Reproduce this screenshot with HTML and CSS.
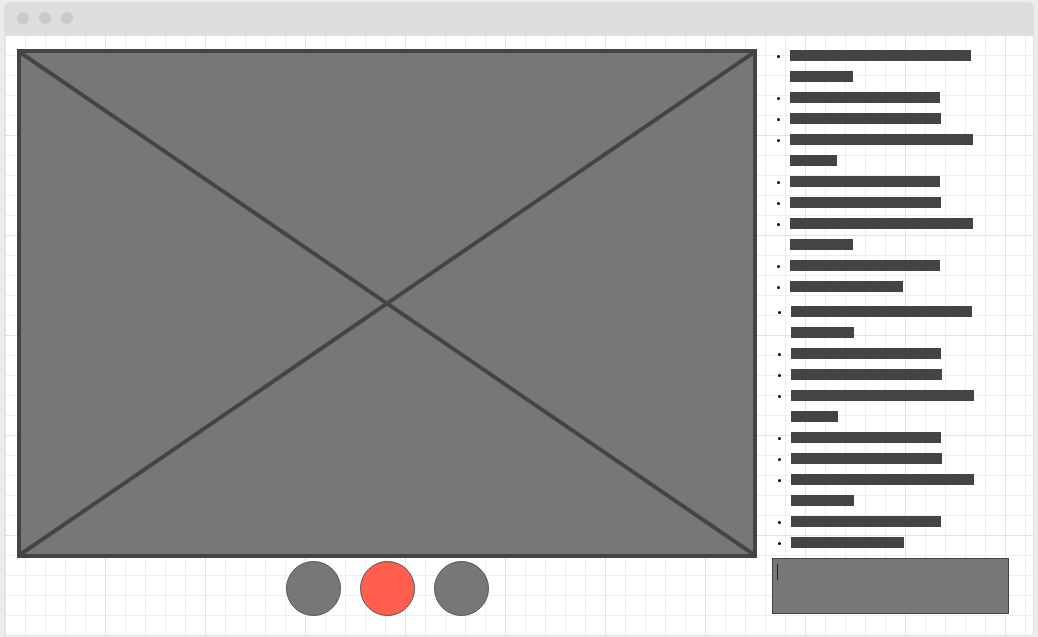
FILE: index.html
```html
<!DOCTYPE html>
<html lang="en">
<head>
    <meta charset="UTF-8">
    <meta name="viewport" content="width=device-width, initial-scale=1.0">
    <title>Video Chat Wireframe</title>
    <link rel="stylesheet" href="styles.css">
</head>
<body>
    <div class="window">
        <div class="titlebar">
            <span class="dot"></span>
            <span class="dot"></span>
            <span class="dot"></span>
        </div>
        <div class="content">
            <div class="main">
                <div class="video">
                    <svg class="cross" viewBox="0 0 100 100" preserveAspectRatio="none">
                        <line x1="0" y1="0" x2="100" y2="100" vector-effect="non-scaling-stroke"/>
                        <line x1="100" y1="0" x2="0" y2="100" vector-effect="non-scaling-stroke"/>
                    </svg>
                </div>
                <div class="controls">
                    <span class="btn-round"></span>
                    <span class="btn-round hangup"></span>
                    <span class="btn-round"></span>
                </div>
            </div>
            <div class="side">
                <ul class="chat">
                    <li><span class="bar" style="width:181px"></span><span class="bar" style="width:63px"></span></li>
                    <li><span class="bar" style="width:150px"></span></li>
                    <li><span class="bar" style="width:151px"></span></li>
                    <li><span class="bar" style="width:183px"></span><span class="bar" style="width:47px"></span></li>
                    <li><span class="bar" style="width:150px"></span></li>
                    <li><span class="bar" style="width:151px"></span></li>
                    <li><span class="bar" style="width:183px"></span><span class="bar" style="width:63px"></span></li>
                    <li><span class="bar" style="width:150px"></span></li>
                    <li><span class="bar" style="width:113px"></span></li>
                </ul>
                <ul class="chat second">
                    <li><span class="bar" style="width:181px"></span><span class="bar" style="width:63px"></span></li>
                    <li><span class="bar" style="width:150px"></span></li>
                    <li><span class="bar" style="width:151px"></span></li>
                    <li><span class="bar" style="width:183px"></span><span class="bar" style="width:47px"></span></li>
                    <li><span class="bar" style="width:150px"></span></li>
                    <li><span class="bar" style="width:151px"></span></li>
                    <li><span class="bar" style="width:183px"></span><span class="bar" style="width:63px"></span></li>
                    <li><span class="bar" style="width:150px"></span></li>
                    <li><span class="bar" style="width:113px"></span></li>
                </ul>
                <div class="input-box">
                    <span class="caret"></span>
                </div>
            </div>
        </div>
    </div>
</body>
</html>
```

FILE: styles.css
```css
body {
    margin: 0;
    background: #ececec;
    font-family: "Liberation Sans", Arial, sans-serif;
}
.window {
    margin: 2px 4px 0 4px;
    width: 1030px;
    height: 634px;
    display: flex;
    flex-direction: column;
}
.titlebar {
    height: 33px;
    background: #dddddd;
    border-radius: 6px 6px 0 0;
    display: flex;
    align-items: center;
    gap: 10px;
    padding-left: 13px;
    box-sizing: border-box;
    padding-bottom: 1px;
}
.dot {
    width: 12px;
    height: 12px;
    border-radius: 50%;
    background: #cacaca;
}
.content {
    flex: 1;
    display: flex;
    border-left: 1px solid #e2e2e2;
    border-right: 1px solid #e2e2e2;
    border-bottom: 1px solid #e2e2e2;
    background-color: #fff;
    background-image:
        linear-gradient(to right, #e2e2e2 1px, transparent 1px),
        linear-gradient(to bottom, #e2e2e2 1px, transparent 1px),
        linear-gradient(to right, #eeeeee 1px, transparent 1px),
        linear-gradient(to bottom, #eeeeee 1px, transparent 1px);
    background-size: 100px 100px, 100px 100px, 20px 20px, 20px 20px;
    padding: 14px 0 0 12px;
}
.main {
    width: 740px;
    display: flex;
    flex-direction: column;
}
.video {
    height: 509px;
    box-sizing: border-box;
    border: 4px solid #444;
    background: #777;
}
.cross {
    display: block;
    width: 100%;
    height: 100%;
}
.cross line {
    stroke: #444;
    stroke-width: 4;
}
.controls {
    margin-top: 3px;
    display: flex;
    justify-content: center;
    gap: 19px;
}
.btn-round {
    width: 55px;
    height: 55px;
    box-sizing: border-box;
    border-radius: 50%;
    border: 1px solid #555;
    background: #777;
}
.btn-round.hangup {
    background: #ff5f4c;
}
.side {
    margin-left: 15px;
    width: 237px;
    display: flex;
    flex-direction: column;
}
.chat {
    list-style: none;
    margin: 1px 0 0 0;
    padding: 0 0 0 18px;
    display: flex;
    flex-direction: column;
    gap: 10px;
}
.chat.second {
    margin-top: 14px;
    padding-left: 19px;
}
.chat li {
    position: relative;
    display: flex;
    flex-direction: column;
    gap: 10px;
}
.chat li::before {
    content: "";
    position: absolute;
    left: -13px;
    top: 5px;
    width: 3px;
    height: 3px;
    border-radius: 50%;
    background: #000;
}
.bar {
    display: block;
    height: 11px;
    background: #444;
}
.input-box {
    margin-top: 10px;
    height: 56px;
    box-sizing: border-box;
    border: 1px solid #444;
    background: #777;
    padding: 5px 0 0 4px;
}
.caret {
    display: block;
    width: 1px;
    height: 16px;
    background: #222;
}
```
